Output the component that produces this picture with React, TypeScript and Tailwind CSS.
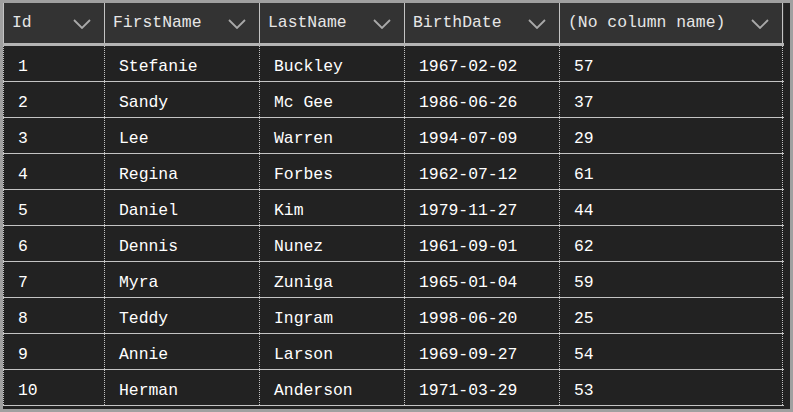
import React from "react";

type Row = [string, string, string, string, string];

const rows: Row[] = [
  ["1", "Stefanie", "Buckley", "1967-02-02", "57"],
  ["2", "Sandy", "Mc Gee", "1986-06-26", "37"],
  ["3", "Lee", "Warren", "1994-07-09", "29"],
  ["4", "Regina", "Forbes", "1962-07-12", "61"],
  ["5", "Daniel", "Kim", "1979-11-27", "44"],
  ["6", "Dennis", "Nunez", "1961-09-01", "62"],
  ["7", "Myra", "Zuniga", "1965-01-04", "59"],
  ["8", "Teddy", "Ingram", "1998-06-20", "25"],
  ["9", "Annie", "Larson", "1969-09-27", "54"],
  ["10", "Herman", "Anderson", "1971-03-29", "53"],
];

const columns = [
  { name: "Id", w: "w-[102px]" },
  { name: "FirstName", w: "w-[155px]" },
  { name: "LastName", w: "w-[145px]" },
  { name: "BirthDate", w: "w-[155px]" },
  { name: "(No column name)", w: "w-[223px]" },
];

function Chevron() {
  return (
    <svg width="18" height="10" viewBox="0 0 18 10" className="shrink-0 mt-[2px]">
      <polyline points="1,1 9,9 17,1" fill="none" stroke="#a9a9a9" strokeWidth="1.8" />
    </svg>
  );
}

export default function App() {
  return (
    <div
      className="w-[793px] h-[412px] bg-[#a0a0a0] p-[3px]"
      style={{ fontFamily: '"Liberation Mono", monospace' }}
    >
      <div className="w-full h-full bg-[#222222] overflow-hidden">
        <div className="flex h-[43px] bg-[#333333] border-b-[3px] border-[#b4b4b4] w-[781px]">
          {columns.map((c, i) => (
            <div
              key={c.name}
              className={`${c.w} flex items-center justify-between pl-[8px] pr-[13px] border-r border-[#c4c4c4] text-[16.4px] text-[#e6e6e6] ${
                i === 0 ? "border-l" : ""
              }`}
            >
              <span>{c.name}</span>
              <Chevron />
            </div>
          ))}
        </div>
        {rows.map((r) => (
          <div key={r[0]} className="flex h-[36px] border-b border-[#c4c4c4] w-[781px]">
            {r.map((v, i) => (
              <div
                key={i}
                className={`${columns[i].w} flex items-center pl-[14px] pt-[7px] border-r border-dotted border-[#c4c4c4] text-[16.4px] text-white ${
                  i === 0 ? "border-l" : ""
                }`}
              >
                {v}
              </div>
            ))}
          </div>
        ))}
      </div>
    </div>
  );
}
